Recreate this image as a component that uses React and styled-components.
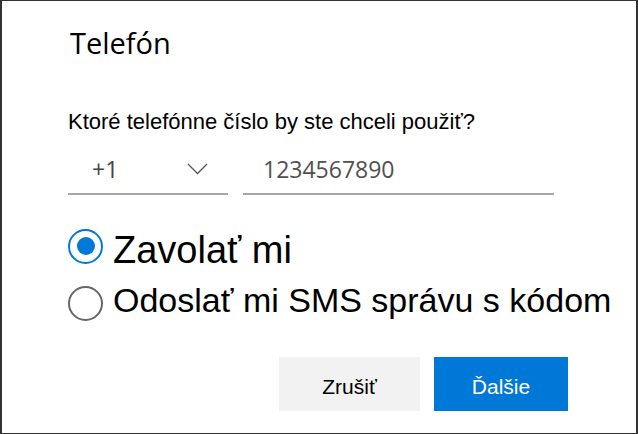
import React, { useState } from "react";
import styled, { createGlobalStyle } from "styled-components";

const GlobalStyle = createGlobalStyle`
  html, body {
    margin: 0;
    padding: 0;
    background: #fff;
  }
  body {
    font-family: "Liberation Sans", Arial, sans-serif;
    color: #000;
  }
`;

// the selected option is drawn a little larger in the source dialog
const options = [
  { id: "call", label: "Zavolať mi", size: 38, shift: 8 },
  { id: "sms", label: "Odoslať mi SMS správu s kódom", size: 34, shift: -6 },
];

const App = () => {
  const [method, setMethod] = useState("call");

  return (
    <>
      <GlobalStyle />
      <Frame>
        <Title>Telefón</Title>
        <Label>Ktoré telefónne číslo by ste chceli použiť?</Label>
        <FieldRow>
          <Select>
            <SelectValue>+1</SelectValue>
            <svg width="21" height="12" viewBox="0 0 21 12">
              <polyline points="1,1 10.5,10.5 20,1" fill="none" stroke="#555" strokeWidth="1.3" />
            </svg>
          </Select>
          <Input defaultValue="1234567890" />
        </FieldRow>
        <RadioList>
          {options.map((opt) => (
            <RadioRow key={opt.id} onClick={() => setMethod(opt.id)}>
              <Circle $checked={method === opt.id} />
              <RadioText $size={opt.size} $shift={opt.shift}>
                {opt.label}
              </RadioText>
            </RadioRow>
          ))}
        </RadioList>
        <Actions>
          <Button $width={141}>Zrušiť</Button>
          <Button $primary $width={134}>Ďalšie</Button>
        </Actions>
      </Frame>
    </>
  );
};

const Frame = styled.div`
  width: 638px;
  height: 434px;
  box-sizing: border-box;
  border-style: solid;
  border-color: #333;
  border-width: 1px 2px 1px 2px;
  padding: 0 68px 0 66px;
  display: flex;
  flex-direction: column;
  overflow: hidden;
`;

const Title = styled.h1`
  margin: 24px 0 0 2px;
  font-family: "Open Sans", "Noto Sans", sans-serif;
  font-size: 29px;
  line-height: 36px;
  font-weight: 400;
`;

const Label = styled.div`
  margin-top: 49px;
  font-size: 22px;
  line-height: 24px;
`;

const FieldRow = styled.div`
  margin-top: 17px;
  display: flex;
  gap: 15px;
`;

const Select = styled.div`
  width: 160px;
  height: 44px;
  box-sizing: border-box;
  border-bottom: 2px solid #a6a6a6;
  padding: 0 20px 6px 24px;
  display: flex;
  align-items: center;
  justify-content: space-between;
`;

const SelectValue = styled.span`
  font-family: "Open Sans", "Noto Sans", sans-serif;
  font-size: 23px;
  color: #444;
`;

const Input = styled.input`
  width: 311px;
  height: 44px;
  box-sizing: border-box;
  border: none;
  border-bottom: 2px solid #a6a6a6;
  outline: none;
  padding: 0 0 6px 20px;
  font-family: "Open Sans", "Noto Sans", sans-serif;
  font-size: 23px;
  color: #505050;
  background: transparent;
`;

const RadioList = styled.div`
  margin-top: 28px;
  display: flex;
  flex-direction: column;
  gap: 11px;
`;

const RadioRow = styled.label`
  height: 46px;
  display: flex;
  align-items: center;
  gap: 10px;
  cursor: pointer;
`;

const Circle = styled.span`
  width: 35px;
  height: 35px;
  box-sizing: border-box;
  border-radius: 50%;
  border: 2px solid ${(p) => (p.$checked ? "#0078d7" : "#666")};
  display: flex;
  align-items: center;
  justify-content: center;
  flex-shrink: 0;
  &::after {
    content: "";
    width: 18px;
    height: 18px;
    border-radius: 50%;
    background: #0078d7;
    display: ${(p) => (p.$checked ? "block" : "none")};
  }
`;

const RadioText = styled.span`
  font-size: ${(p) => p.$size}px;
  line-height: 46px;
  white-space: nowrap;
  padding-top: ${(p) => Math.max(p.$shift, 0)}px;
  padding-bottom: ${(p) => Math.max(-p.$shift, 0)}px;
`;

const Actions = styled.div`
  margin-top: 31px;
  display: flex;
  justify-content: flex-end;
  gap: 14px;
`;

const Button = styled.button`
  width: ${(p) => p.$width}px;
  height: 54px;
  border: none;
  padding: 6px 0 0;
  font-family: "Liberation Sans", Arial, sans-serif;
  font-size: 21px;
  background: ${(p) => (p.$primary ? "#0078d7" : "#f2f2f2")};
  color: ${(p) => (p.$primary ? "#fff" : "#000")};
  cursor: pointer;
`;

export default App;
